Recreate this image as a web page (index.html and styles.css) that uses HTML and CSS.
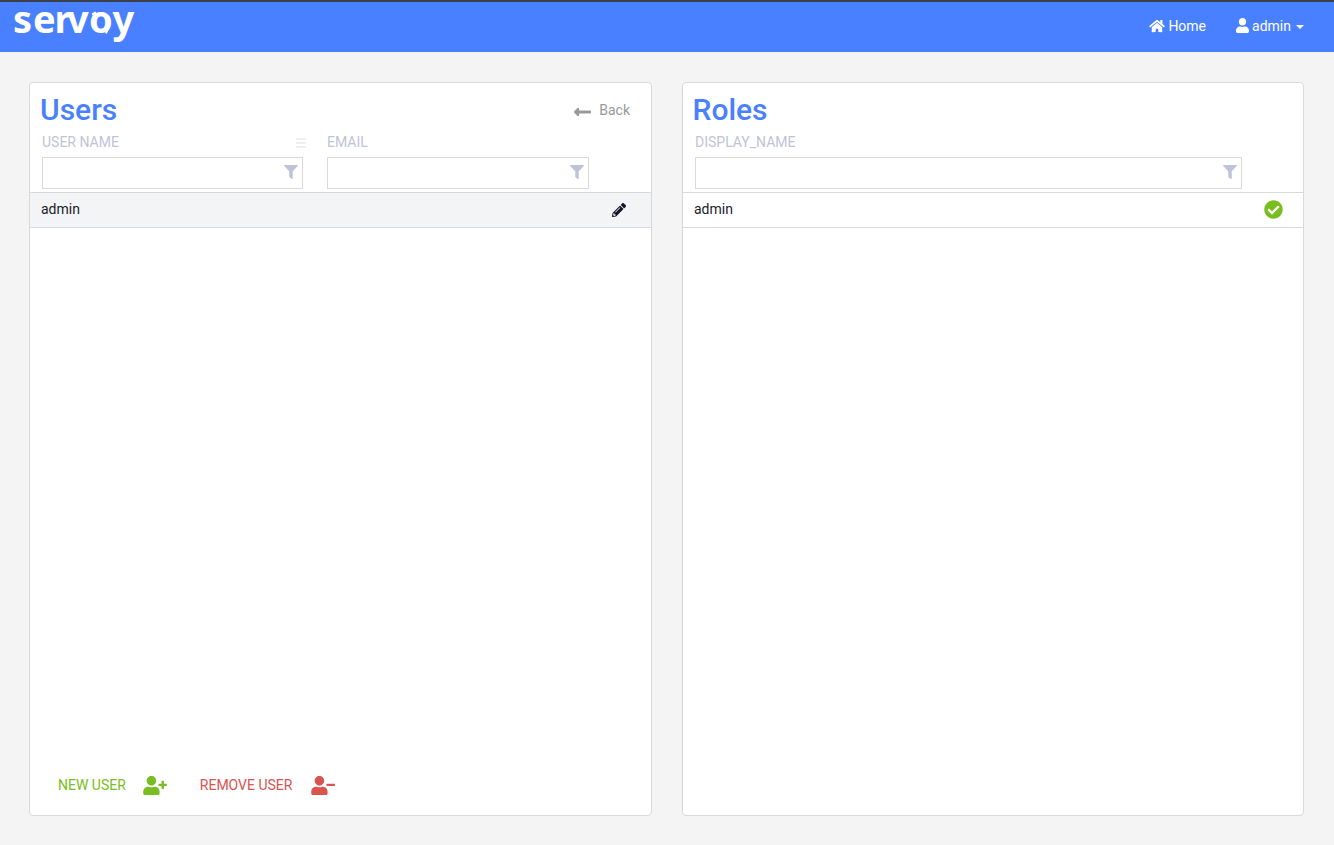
FILE: index.html
```html
<!DOCTYPE html>
<html lang="en">
<head>
<meta charset="utf-8">
<title>Servoy - Users</title>
<link rel="stylesheet" href="styles.css">
</head>
<body>
<svg class="defs" width="0" height="0" aria-hidden="true">
  <symbol id="person" viewBox="0 0 448 512"><path d="M224 256c70.7 0 128-57.3 128-128S294.7 0 224 0 96 57.3 96 128s57.3 128 128 128zm89.6 32h-16.7c-22.2 10.2-46.9 16-72.9 16s-50.6-5.8-72.9-16h-16.7C60.2 288 0 348.2 0 422.4V464c0 26.5 21.5 48 48 48h352c26.5 0 48-21.5 48-48v-41.6c0-74.2-60.2-134.4-134.4-134.4z"/></symbol>
  <symbol id="filter" viewBox="0 0 512 512"><path d="M487.976 0H24.028C2.71 0-8.047 25.866 7.058 40.971L192 225.941V432c0 7.831 3.821 15.17 10.237 19.662l80 55.98C298.02 518.69 320 507.493 320 487.98V225.941l184.947-184.97C520.021 25.896 509.338 0 487.976 0z"/></symbol>
</svg>
<header class="topbar">
  <svg class="logo" width="130" height="44" viewBox="0 0 130 44" role="img" aria-label="servoy">
    <text class="logo-text" x="-1 19 40.5 53 75 98.500" y="31">servoy</text>
    <path class="logo-tip" d="M78 12.500l4-2M92 31.500l2-5"/>
  </svg>
  <nav class="nav">
    <a class="nav-item"><svg class="icon" width="16" height="14" viewBox="0 0 576 512"><path d="M280.37 148.26L96 300.11V464a16 16 0 0 0 16 16l112.06-.29a16 16 0 0 0 15.92-16V368a16 16 0 0 1 16-16h64a16 16 0 0 1 16 16v95.64a16 16 0 0 0 16 16.05L464 480a16 16 0 0 0 16-16V300L295.67 148.26a12.19 12.19 0 0 0-15.3 0zM571.6 251.47L488 182.56V44.05a12 12 0 0 0-12-12h-56a12 12 0 0 0-12 12v72.61L318.47 43a48 48 0 0 0-61 0L4.34 251.47a12 12 0 0 0-1.6 16.9l25.5 31A12 12 0 0 0 45.15 301l235.22-193.74a12.19 12.19 0 0 1 15.3 0L530.9 301a12 12 0 0 0 16.9-1.6l25.5-31a12 12 0 0 0-1.7-16.93z"/></svg><span>Home</span></a>
    <a class="nav-item"><svg class="icon" width="13" height="15"><use href="#person"/></svg><span>admin</span><i class="caret"></i></a>
  </nav>
</header>
<main class="panels">
  <section class="panel">
    <div class="panel-head">
      <h1 class="title">Users</h1>
      <a class="back"><svg class="icon" width="18" height="20" viewBox="0 0 448 512"><path d="M134.059 296H436c6.627 0 12-5.373 12-12v-56c0-6.627-5.373-12-12-12H134.059v-46.059c0-21.382-25.851-32.09-40.971-16.971L7.029 239.029c-9.373 9.373-9.373 24.569 0 33.941l86.059 86.059c15.119 15.119 40.971 4.411 40.971-16.971V296z"/></svg><span>Back</span></a>
    </div>
    <div class="columns users-columns">
      <div class="column"><div class="label"><span>USER NAME</span><svg class="menu" width="10" height="11" viewBox="0 0 10 11"><path d="M0 1h10M0 5h10M0 9h10"/></svg></div><div class="field"><svg class="icon" width="14" height="14"><use href="#filter"/></svg></div></div>
      <div class="column"><div class="label"><span>EMAIL</span></div><div class="field"><svg class="icon" width="14" height="14"><use href="#filter"/></svg></div></div>
    </div>
    <div class="row selected"><span>admin</span><svg class="icon pencil" width="14" height="14" viewBox="0 0 512 512"><path d="M497.9 142.1l-46.1 46.1c-4.7 4.7-12.3 4.7-17 0l-111-111c-4.700-4.700-4.700-12.300 0-17l46.100-46.100c18.700-18.700 49.100-18.700 67.900 0l60.100 60.100c18.800 18.700 18.800 49.100 0 67.900zM284.200 99.800L21.600 362.400.4 483.900c-2.900 16.400 11.400 30.600 27.800 27.800l121.500-21.300 262.600-262.600c4.700-4.700 4.700-12.300 0-17l-111-111c-4.800-4.700-12.400-4.700-17.100 0zM124.100 339.900c-5.500-5.500-5.500-14.300 0-19.800l154-154c5.500-5.500 14.300-5.500 19.800 0s5.500 14.300 0 19.800l-154 154c-5.500 5.500-14.300 5.500-19.800 0zM88 424h48v36.300l-64.500 11.300-31.100-31.100L51.700 376H88v48z"/></svg></div>
    <div class="actions">
      <a class="action add"><span>NEW USER</span><svg class="icon" width="24" height="19" viewBox="0 0 640 512"><use href="#person" width="448" height="512"/><path d="M624 208h-64v-64c0-8.800-7.200-16-16-16h-32c-8.800 0-16 7.200-16 16v64h-64c-8.800 0-16 7.200-16 16v32c0 8.800 7.200 16 16 16h64v64c0 8.800 7.200 16 16 16h32c8.800 0 16-7.200 16-16v-64h64c8.800 0 16-7.200 16-16v-32c0-8.800-7.200-16-16-16z"/></svg></a>
      <a class="action remove"><span>REMOVE USER</span><svg class="icon" width="24" height="19" viewBox="0 0 640 512"><use href="#person" width="448" height="512"/><path d="M624 208H432c-8.800 0-16 7.200-16 16v32c0 8.800 7.200 16 16 16h192c8.800 0 16-7.200 16-16v-32c0-8.800-7.200-16-16-16z"/></svg></a>
    </div>
  </section>
  <section class="panel">
    <div class="panel-head roles-head"><h1 class="title">Roles</h1></div>
    <div class="columns roles-columns">
      <div class="column"><div class="label"><span>DISPLAY_NAME</span></div><div class="field"><svg class="icon" width="14" height="14"><use href="#filter"/></svg></div></div>
    </div>
    <div class="row"><span>admin</span><svg class="icon check" width="19" height="19" viewBox="0 0 512 512"><path d="M504 256c0 136.967-111.033 248-248 248S8 392.967 8 256 119.033 8 256 8s248 111.033 248 248zM227.314 387.314l184-184c6.248-6.248 6.248-16.379 0-22.627l-22.627-22.627c-6.248-6.249-16.379-6.249-22.628 0L216 308.118l-70.059-70.059c-6.248-6.248-16.379-6.248-22.628 0l-22.627 22.627c-6.248 6.248-6.248 16.379 0 22.627l104 104c6.249 6.249 16.379 6.249 22.628.001z"/></svg></div>
  </section>
</main>
</body>
</html>
```
FILE: styles.css
```css
* { box-sizing: border-box; }
body {
  margin: 0;
  height: 845px;
  display: flex;
  flex-direction: column;
  background: #f4f4f4;
  color: #1b1b2b;
  font: 14px/20px Roboto, sans-serif;
}
.defs { display: none; }
.icon { display: block; flex: none; fill: currentColor; }
.topbar {
  height: 52px;
  flex: none;
  display: flex;
  justify-content: space-between;
  align-items: flex-start;
  padding: 0 30px 0 14px;
  border-top: 2px solid #3d4048;
  background: #4980ff;
  color: #fff;
}
.logo { display: block; overflow: visible; }
.logo-text { font: 700 38px "Noto Sans", sans-serif; fill: #fff; }
.logo-tip { stroke: #fff; stroke-width: 2; }
.nav { display: flex; gap: 30px; padding-top: 14px; }
.nav-item { display: flex; align-items: center; gap: 3px; }
.nav-item .icon { margin-top: -1px; }
.caret { margin: 2px 0 0 2px; border: 4px solid transparent; border-top-color: #fff; border-bottom: 0; }
.panels {
  flex: 1;
  display: grid;
  grid-template-columns: 623px 622px;
  gap: 30px;
  padding: 30px 30px 29px 29px;
}
.panel {
  display: flex;
  flex-direction: column;
  border: 1px solid #d8d9db;
  border-radius: 4px;
  background: #fff;
}
.panel-head {
  height: 49px;
  display: flex;
  justify-content: space-between;
  padding: 9px 21px 0 10px;
}
.roles-head { padding-left: 9.5px; }
.title { margin: 0; color: #4980ff; font-size: 30px; font-weight: 500; line-height: 36px; }
.back { height: 36px; display: flex; align-items: center; gap: 8px; color: #999; }
.back .icon { width: 17px; margin-top: 3px; }
.columns { height: 60px; display: grid; gap: 24px; padding-left: 12px; }
.users-columns { grid-template-columns: 261px 262px; }
.roles-columns { grid-template-columns: 547px; }
.label { display: flex; justify-content: space-between; height: 25px; color: #bfc3d8; }
.menu { display: block; margin: 6px -3px 0 0; stroke: #eff0f3; stroke-width: 2; }
.field {
  height: 32px;
  display: flex;
  justify-content: flex-end;
  padding: 7px 4px 0;
  border: 1px solid #d8d9db;
  color: #bfc3d8;
}
.row {
  height: 36px;
  display: flex;
  justify-content: space-between;
  padding: 6px 20px 0 11px;
  border: solid #d8d9db;
  border-width: 1px 0;
}
.selected { padding-right: 25px; background: #f3f4f6; }
.pencil { margin-top: 4px; color: #15152a; }
.check { margin-top: 1px; color: #78be20; }
.actions { margin-top: auto; display: flex; gap: 33px; padding: 0 28px 20px; }
.action { display: flex; gap: 17px; align-items: center; }
.action .icon { margin-top: 2px; }
.add { color: #78be20; }
.remove { gap: 18.5px; color: #d9534f; }
```
